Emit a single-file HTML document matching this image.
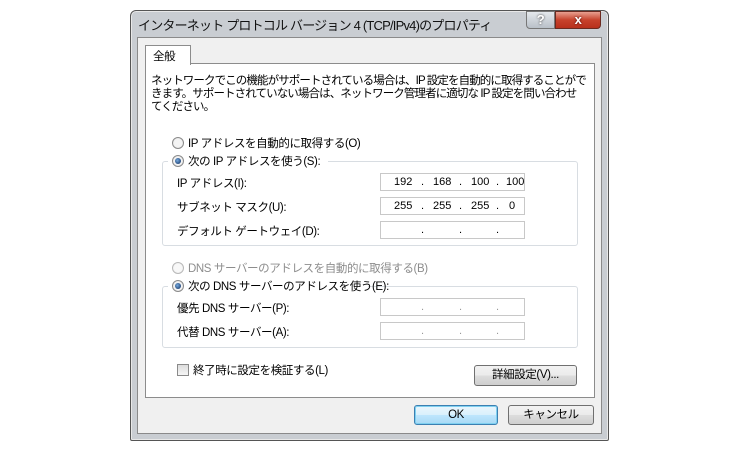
<!DOCTYPE html>
<html><head><meta charset="utf-8"><style>
*{margin:0;padding:0;box-sizing:border-box}
body{width:740px;height:450px;background:#fff;position:relative;overflow:hidden;font-family:"Liberation Sans","Noto Sans CJK JP",sans-serif;font-size:11.5px;color:#000;letter-spacing:-0.4px}
.a{position:absolute;white-space:nowrap}
.win{left:130px;top:10px;width:479px;height:431px;background:#c9cdd2;border:1px solid #555;border-radius:6px 6px 2px 2px;box-shadow:inset 0 0 0 1px #e8e8e8}
.body{left:137px;top:37px;width:465px;height:397px;background:#f0f0f0;border:1px solid #8a8a8a}
.panel{left:145px;top:63px;width:450px;height:335px;background:#fff;border:1px solid #8c8c8c}
.tab{left:145px;top:45px;width:46px;height:20px;background:#fff;border:1px solid #8c8c8c;border-bottom:none;padding:2px 0 0 7px}
.field{width:145px;height:18px;border:1px solid #c8c8c8;background:#fff;font-size:11px;line-height:16px;letter-spacing:0}
.field span{position:absolute;top:0}
.grp{border:1px solid #d8dde2;border-radius:3px}
.radio{width:12px;height:12px;border-radius:50%;border:1px solid #8a8a8a;background:radial-gradient(circle,#f4f4f4 50%,#ddd)}
.radio.on::after{content:"";position:absolute;left:2px;top:2px;width:6px;height:6px;border-radius:50%;background:radial-gradient(circle at 40% 40%,#7ad 0,#136 90%)}
.btn{border:1px solid #707070;border-radius:3px;background:linear-gradient(#f2f2f2 0,#ebebeb 50%,#dddddd 51%,#cfcfcf);text-align:center;line-height:18px}
</style></head><body>
<div class="a win"></div>
<div class="a" style="left:138px;top:15px;font-size:13px;letter-spacing:-0.8px;color:#111">インターネット プロトコル バージョン 4 (TCP/IPv4)のプロパティ</div>
<div class="a" style="left:526px;top:11px;width:29px;height:18px;border:1px solid #777;border-radius:0 0 0 4px;background:linear-gradient(#e4e8ec,#b9c0c8);color:#fff;text-align:center;font-weight:bold;font-size:13px;line-height:16px;text-shadow:0 0 2px #333">?</div>
<div class="a" style="left:555px;top:11px;width:46px;height:18px;border:1px solid #6b2a20;border-radius:0 0 4px 0;background:linear-gradient(#e8a090,#c7422c 50%,#b8301c);color:#fff;text-align:center;font-weight:bold;font-size:13px;line-height:16px;text-shadow:0 0 2px #400">x</div>
<div class="a body"></div>
<div class="a panel"></div>
<div class="a tab">全般</div>
<div class="a" style="left:151px;top:75px;line-height:13px;font-size:11.5px;letter-spacing:-0.9px">ネットワークでこの機能がサポートされている場合は、IP 設定を自動的に取得することがで<br>きます。サポートされていない場合は、ネットワーク管理者に適切な IP 設定を問い合わせ<br>てください。</div>

<div class="a radio" style="left:172px;top:137px"></div>
<div class="a" style="left:188px;top:135px">IP アドレスを自動的に取得する(O)</div>
<div class="a grp" style="left:162px;top:161px;width:416px;height:85px"></div>
<div class="a" style="left:168px;top:152px;width:160px;height:16px;background:#fff"></div>
<div class="a radio on" style="left:172px;top:155px"></div>
<div class="a" style="left:188px;top:153px">次の IP アドレスを使う(S):</div>
<div class="a" style="left:177px;top:175px">IP アドレス(I):</div>
<div class="a" style="left:177px;top:199px">サブネット マスク(U):</div>
<div class="a" style="left:177px;top:223px">デフォルト ゲートウェイ(D):</div>
<div class="a field" style="left:380px;top:173px"><span style="left:13px">192</span><span style="left:40px">.</span><span style="left:52px">168</span><span style="left:78px">.</span><span style="left:90px">100</span><span style="left:115px">.</span><span style="left:125px">100</span></div>
<div class="a field" style="left:380px;top:197px"><span style="left:13px">255</span><span style="left:40px">.</span><span style="left:52px">255</span><span style="left:78px">.</span><span style="left:90px">255</span><span style="left:115px">.</span><span style="left:128px">0</span></div>
<div class="a field" style="left:380px;top:221px"><span style="left:40px">.</span><span style="left:78px">.</span><span style="left:115px">.</span></div>

<div class="a radio" style="left:172px;top:262px;opacity:.6"></div>
<div class="a" style="left:188px;top:260px;color:#8d8d8d">DNS サーバーのアドレスを自動的に取得する(B)</div>
<div class="a grp" style="left:162px;top:286px;width:416px;height:62px"></div>
<div class="a" style="left:168px;top:277px;width:200px;height:16px;background:#fff"></div>
<div class="a radio on" style="left:172px;top:280px"></div>
<div class="a" style="left:188px;top:278px">次の DNS サーバーのアドレスを使う(E):</div>
<div class="a" style="left:177px;top:300px">優先 DNS サーバー(P):</div>
<div class="a" style="left:177px;top:324px">代替 DNS サーバー(A):</div>
<div class="a field" style="left:380px;top:298px"><span style="left:40px;color:#999">.</span><span style="left:78px;color:#999">.</span><span style="left:115px;color:#999">.</span></div>
<div class="a field" style="left:380px;top:322px"><span style="left:40px;color:#999">.</span><span style="left:78px;color:#999">.</span><span style="left:115px;color:#999">.</span></div>

<div class="a" style="left:177px;top:364px;width:12px;height:12px;border:1px solid #8a8a8a;background:linear-gradient(#ddd,#f6f6f6)"></div>
<div class="a" style="left:193px;top:362px">終了時に設定を検証する(L)</div>
<div class="a btn" style="left:474px;top:365px;width:103px;height:21px">詳細設定(V)...</div>
<div class="a btn" style="left:414px;top:405px;width:84px;height:20px;border-color:#3c7fb1;box-shadow:inset 0 0 0 1px #7fd0f0;background:linear-gradient(#eaf6fd,#d9f0fc 50%,#bee6fd 51%,#a7d9f5)">OK</div>
<div class="a btn" style="left:508px;top:405px;width:86px;height:20px">キャンセル</div>
</body></html>
